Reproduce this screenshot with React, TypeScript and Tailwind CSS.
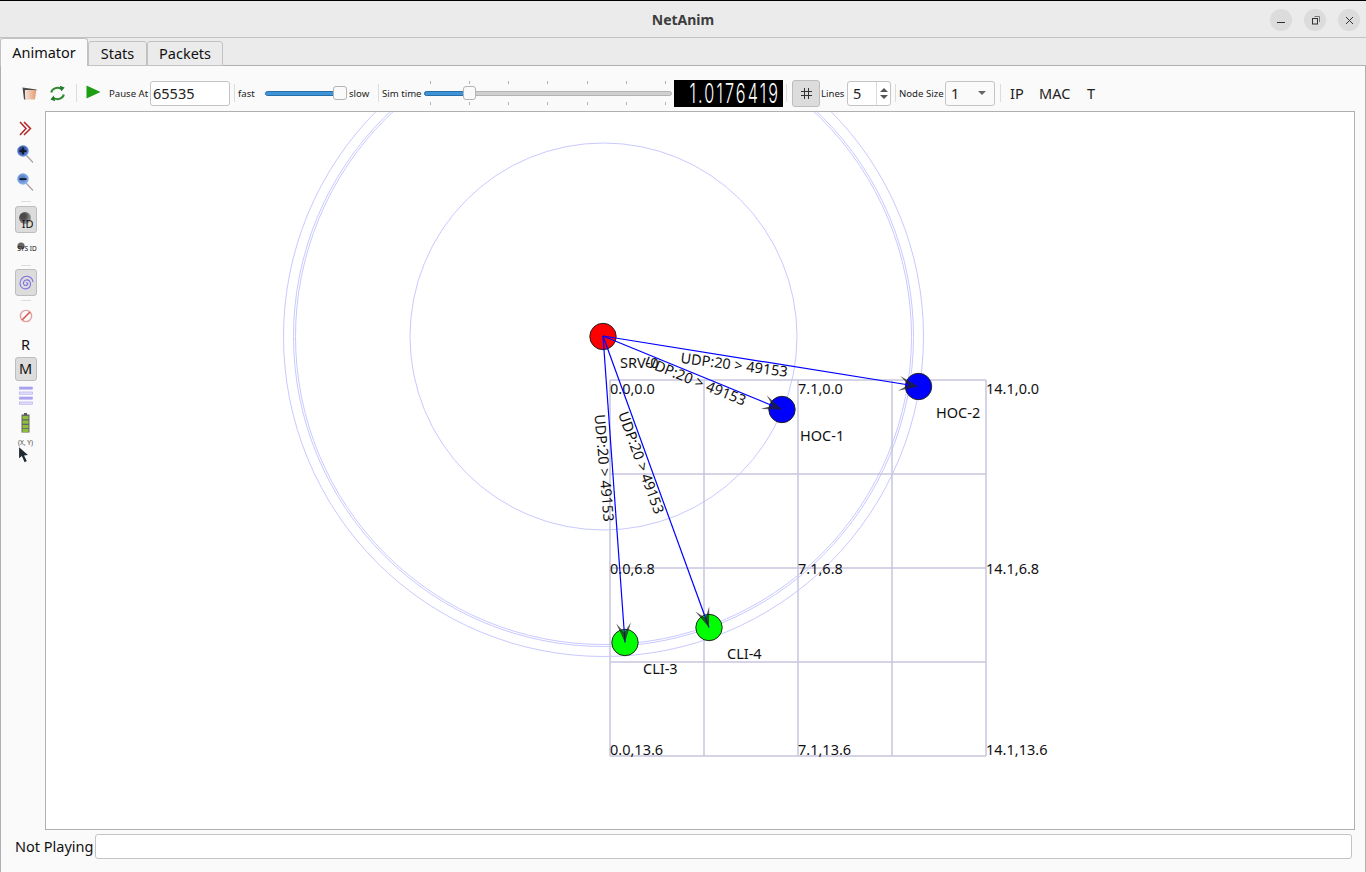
const font = { fontFamily: '"Noto Sans", "Open Sans", sans-serif' };

const grid = [610, 704, 798, 892, 986];
const gridY = [380, 474, 568, 662, 756];

const coords = [
  { t: '0.0,0.0', x: 610, y: 394 },
  { t: '7.1,0.0', x: 798, y: 394 },
  { t: '14.1,0.0', x: 986, y: 394 },
  { t: '0.0,6.8', x: 610, y: 574 },
  { t: '7.1,6.8', x: 798, y: 574 },
  { t: '14.1,6.8', x: 986, y: 574 },
  { t: '0.0,13.6', x: 610, y: 755 },
  { t: '7.1,13.6', x: 798, y: 755 },
  { t: '14.1,13.6', x: 986, y: 755 },
];

const nodes = [
  { x: 603, y: 336.5, fill: '#ff0000', label: 'SRV-0', lx: 620, ly: 368 },
  { x: 782, y: 409.5, fill: '#0000ff', label: 'HOC-1', lx: 800, ly: 441 },
  { x: 918.5, y: 386.5, fill: '#0000ff', label: 'HOC-2', lx: 936, ly: 418 },
  { x: 625, y: 642.5, fill: '#00ff00', label: 'CLI-3', lx: 643, ly: 674 },
  { x: 709, y: 627.5, fill: '#00ff00', label: 'CLI-4', lx: 727, ly: 659 },
];

const packetLabels = [
  { cx: 734, cy: 366, a: 7.5 },
  { cx: 695, cy: 382, a: 22 },
  { cx: 603, cy: 468, a: 85 },
  { cx: 640, cy: 463, a: 70 },
];

// arrow head drawn back from the tip along the line
function Head({ x, y }: { x: number; y: number }) {
  const back = Math.atan2(336 - y, 603 - x);
  const pt = (a: number, l: number) => `${x + Math.cos(back + a) * l},${y + Math.sin(back + a) * l}`;
  const s = 0.36;
  return (
    <polygon
      points={`${x},${y} ${pt(s, 21)} ${pt(0, 10)} ${pt(-s, 21)}`}
      fill="#222222"
      fillOpacity={0.75}
    />
  );
}

function Topology() {
  return (
    <svg viewBox="46 112 1308 717" className="block w-full h-full" style={font}>
      <g fill="none" stroke="#c9c9ff" strokeWidth={1}>
        <circle cx={603.5} cy={336.5} r={193.5} />
        <circle cx={603.5} cy={336.5} r={320} />
        <circle cx={603.5} cy={336.5} r={310} />
        <circle cx={603.5} cy={336.5} r={308} />
      </g>
      <g stroke="#c6c6de" strokeWidth={1.5}>
        {grid.map((x) => (
          <line key={x} x1={x} y1={380} x2={x} y2={756} />
        ))}
        {gridY.map((y) => (
          <line key={y} x1={610} y1={y} x2={986} y2={y} />
        ))}
      </g>
      <g fontSize={14.5} fill="#111111">
        {coords.map((c) => (
          <text key={c.t} x={c.x} y={c.y}>
            {c.t}
          </text>
        ))}
      </g>
      {nodes.map((n) => (
        <circle key={n.label} cx={n.x} cy={n.y} r={13.2} fill={n.fill} stroke="#222222" strokeWidth={1} />
      ))}
      <g fontSize={14.5} fill="#111111">
        {nodes.map((n) => (
          <text key={n.label} x={n.lx} y={n.ly}>
            {n.label}
          </text>
        ))}
      </g>
      <g stroke="#0000ff" strokeWidth={1.2}>
        {nodes.slice(1).map((n) => (
          <line key={n.label} x1={603} y1={336} x2={n.x} y2={n.y} />
        ))}
      </g>
      {nodes.slice(1).map((n) => (
        <Head key={n.label} x={n.x} y={n.y} />
      ))}
      <g fontSize={14.5} fill="#111111" textAnchor="middle">
        {packetLabels.map((p) => (
          <text key={p.a} x={0} y={0} transform={`translate(${p.cx} ${p.cy}) rotate(${p.a})`} dominantBaseline="middle">
            UDP:20 &gt; 49153
          </text>
        ))}
      </g>
    </svg>
  );
}

function Sep() {
  return <div className="w-px h-[18px] bg-[#dcdcdc] shrink-0" />;
}

function HSep({ className }: { className: string }) {
  return <div className={`h-px w-[10px] bg-[#dcdcdc] ${className}`} />;
}

function Magnifier({ plus }: { plus: boolean }) {
  const id = plus ? 'lensPlus' : 'lensMinus';
  return (
    <svg width="20" height="20" viewBox="0 0 20 20">
      <defs>
        <radialGradient id={id} cx="0.45" cy="0.45" r="0.55">
          <stop offset="0.3" stopColor={plus ? '#27397c' : '#5b7fc0'} />
          <stop offset="1" stopColor={plus ? '#6f9cf2' : '#8fb8f8'} />
        </radialGradient>
      </defs>
      <line x1="10" y1="11" x2="17" y2="18.5" stroke="#b39aa6" strokeWidth="1.2" />
      <circle cx="7" cy="7" r="5.8" fill={`url(#${id})`} />
      <rect x="3.5" y="6.2" width="7" height="1.8" fill="#10182e" />
      {plus && <rect x="6.1" y="3.5" width="1.8" height="7" fill="#10182e" />}
    </svg>
  );
}

function LeftBar() {
  return (
    <div className="w-[44px] shrink-0 flex flex-col items-center pl-[5px] pt-[7px] text-[#111]">
      <div className="h-[20px] flex items-center">
        <svg width="13" height="15" viewBox="0 0 13 15" fill="none" stroke="#b3262a" strokeWidth="1.5">
          <path d="M1 1 L7 7.5 L1 14" />
          <path d="M5 1 L11.5 7.5 L5 14" />
        </svg>
      </div>
      <div className="h-[32px] flex items-center">
        <Magnifier plus />
      </div>
      <div className="h-[24px] flex items-center">
        <Magnifier plus={false} />
      </div>
      <HSep className="mt-[7px] mb-[3px]" />
      <div className="w-[22px] h-[27px] mt-px rounded-[3px] border border-[#bdbdbd] bg-[#dcdcdc] flex items-center justify-center relative">
        <svg width="20" height="20" viewBox="0 0 20 20" className="absolute left-0 top-[2px]">
          <defs>
            <radialGradient id="idBall" cx="0.35" cy="0.35" r="0.75">
              <stop offset="0.3" stopColor="#4a4a4a" />
              <stop offset="1" stopColor="#a8a8a8" />
            </radialGradient>
          </defs>
          <circle cx="9" cy="9" r="6" fill="url(#idBall)" />
        </svg>
        <span className="absolute right-[2px] bottom-[3px] text-[11px] leading-none">ID</span>
      </div>
      <div className="h-[30px] flex items-center relative w-[22px] justify-center">
        <svg width="8" height="8" viewBox="0 0 8 8" className="absolute left-[2px] top-[9px]">
          <circle cx="4" cy="4" r="3.6" fill="#666666" />
        </svg>
        <span className="text-[6.5px] leading-none mt-[3px] ml-[3px] relative whitespace-nowrap">SYS ID</span>
      </div>
      <HSep className="mt-[2px] mb-[3px]" />
      <div className="w-[22px] h-[27px] rounded-[3px] border border-[#bdbdbd] bg-[#dcdcdc] flex items-center justify-center">
        <svg width="16" height="18" viewBox="0 0 16 18" fill="none" stroke="#7b6ee0" strokeWidth="1.1">
          <path d="M8 9 C9.5 8 10.5 10 9 11 C7 12.5 5 10.5 5.5 8.5 C6 6 9.5 5 11.5 7 C13.5 9.5 12.5 13.5 9.5 14.5 C5.5 16 2 13 2 9.5 C2 5 5.5 2 9 2.3 C12 2.5 14.5 5 15 8" />
        </svg>
      </div>
      <HSep className="mt-[4px] mb-[3px]" />
      <div className="h-[24px] flex items-center">
        <svg width="14" height="14" viewBox="0 0 14 14" fill="none">
          <circle cx="7" cy="7" r="5.6" stroke="#e3a0a0" strokeWidth="1.4" />
          <line x1="3" y1="11" x2="11" y2="3" stroke="#d4574f" strokeWidth="1.6" />
        </svg>
      </div>
      <div className="h-[24px] mt-[5px] flex items-center text-[14.5px]">R</div>
      <div className="w-[22px] h-[24px] rounded-[3px] border border-[#bdbdbd] bg-[#dcdcdc] flex items-center justify-center text-[14.5px]">
        M
      </div>
      <div className="h-[28px] flex items-center">
        <svg width="14" height="19" viewBox="0 0 14 19">
          {[1, 6, 11, 16].map((y, i) => (
            <rect key={y} x="0.5" y={y} width="13" height="2.2" fill={i % 2 ? '#e4e1fb' : '#a9a2ee'} stroke="#a9a2ee" strokeWidth="0.6" />
          ))}
        </svg>
      </div>
      <div className="h-[28px] flex items-center">
        <svg width="9" height="20" viewBox="0 0 9 20">
          <rect x="3" y="0" width="3" height="2" fill="#555555" />
          <rect x="0.5" y="1.5" width="8" height="18" fill="#666666" />
          {[3, 7.5, 12, 16].map((y) => (
            <rect key={y} x="1.5" y={y} width="6" height="3.2" fill="#8fbf3a" />
          ))}
        </svg>
      </div>
      <div className="h-[28px] flex flex-col items-center pt-[3px] w-[22px]">
        <span className="text-[6.5px] leading-none text-[#444] whitespace-nowrap">(X, Y)</span>
        <svg width="11" height="16" viewBox="0 0 10 14" className="-ml-[5px]">
          <path d="M1 0 L1 10 L3.5 8 L6 13.5 L8 12.5 L5.5 7.5 L9 7 Z" fill="#1f2a33" />
        </svg>
      </div>
    </div>
  );
}

function TopToolbar() {
  return (
    <div className="h-[45px] flex items-center pt-[9px] text-[#222] shrink-0">
      <div className="w-[21px] shrink-0" />
      <svg width="15" height="13" viewBox="0 0 15 13" className="shrink-0">
        <defs>
          <linearGradient id="bookFace" x1="0" x2="1" y1="0" y2="0">
            <stop offset="0" stopColor="#f6e4d8" />
            <stop offset="1" stopColor="#e39a72" />
          </linearGradient>
        </defs>
        <path d="M0.5 0.5 L14.5 2.5 V3.5 H3 L3.5 12.5 H2 Z" fill="#4c4c4c" />
        <path d="M3 3 H14.3 L13 12.5 H3.5 Z" fill="url(#bookFace)" />
      </svg>
      <div className="w-[12px] shrink-0" />
      <svg width="17" height="17" viewBox="0 0 17 17" fill="none" className="shrink-0">
        <path d="M2.2 7.5 C3 3.6 8 1.4 12.3 4" stroke="#2e8b2e" strokeWidth="2" />
        <path d="M10.8 0.8 L15.6 2.4 L12.3 6.4 Z" fill="#1f7a2a" />
        <path d="M14.8 9.5 C14 13.4 9 15.6 4.7 13" stroke="#2e8b2e" strokeWidth="2" />
        <path d="M6.2 16.2 L1.4 14.6 L4.7 10.6 Z" fill="#1f7a2a" />
      </svg>
      <div className="w-[10px] shrink-0" />
      <Sep />
      <div className="w-[9px] shrink-0" />
      <svg width="15" height="14" viewBox="0 0 15 14" className="shrink-0 -mt-[3px]">
        <polygon points="0.5,0.5 14.5,7 0.5,13.5" fill="#1e9c14" />
      </svg>
      <div className="w-[8px] shrink-0" />
      <span className="text-[9.6px] pt-[2px] w-[41px] shrink-0 whitespace-nowrap">Pause At</span>
      <div className="w-[80px] h-[25px] shrink-0 rounded-[3px] border border-[#c4c4c4] bg-white pl-[2px] flex items-center text-[14.5px] leading-none">
        65535
      </div>
      <div className="w-[4px] shrink-0" />
      <Sep />
      <div className="w-[3px] shrink-0" />
      <span className="text-[9.6px] pt-[2px] w-[27px] shrink-0">fast</span>
      <div className="w-[82px] h-[16px] relative shrink-0 flex items-center">
        <div className="w-full h-[5px] rounded-full bg-[#3d94d8] border border-[#2b6ea5]" />
        <div className="absolute right-0 top-[1px] w-[14px] h-[14px] rounded-[3px] border border-[#b4b4b4] bg-[#fafafa]" />
      </div>
      <div className="w-[2px] shrink-0" />
      <span className="text-[9.6px] pt-[2px] w-[29px] shrink-0">slow</span>
      <Sep />
      <div className="w-[3px] shrink-0" />
      <span className="text-[9.6px] pt-[2px] w-[42px] shrink-0 whitespace-nowrap">Sim time</span>
      <div className="w-[248px] h-[24px] relative shrink-0 flex items-center">
        <div className="absolute inset-x-[6px] top-0 flex justify-between">
          {[0, 1, 2, 3, 4, 5, 6].map((i) => (
            <div key={i} className="w-px h-[3px] bg-[#b4b4b4]" />
          ))}
        </div>
        <div className="absolute inset-x-[6px] bottom-0 flex justify-between">
          {[0, 1, 2, 3, 4, 5, 6].map((i) => (
            <div key={i} className="w-px h-[3px] bg-[#b4b4b4]" />
          ))}
        </div>
        <div className="w-full h-[5px] rounded-full bg-[#d0d0d0] border border-[#b4b4b4]" />
        <div className="absolute left-0 w-[40px] h-[5px] rounded-l-full bg-[#3d94d8] border border-[#2b6ea5]" />
        <div className="absolute left-[39px] top-[5px] w-[13px] h-[14px] rounded-[3px] border border-[#b4b4b4] bg-[#fafafa]" />
      </div>
      <div className="w-[2px] shrink-0" />
      <div
        className="w-[109px] h-[27px] shrink-0 bg-black text-white flex items-center justify-end pr-[3px]"
        style={{ fontFamily: '"Inter", sans-serif' }}
      >
        <span className="w-[90px] text-[27px] font-light leading-none tracking-[3.5px] scale-x-[0.6] origin-right whitespace-nowrap flex justify-end">
          1.0176419
        </span>
      </div>
      <div className="w-[3px] shrink-0" />
      <Sep />
      <div className="w-[5px] shrink-0" />
      <div className="w-[28px] h-[27px] shrink-0 rounded-[3px] border border-[#bdbdbd] bg-[#dcdcdc] flex items-center justify-center">
        <svg width="11" height="11" viewBox="0 0 11 11" stroke="#333333" strokeWidth="1">
          <path d="M3.5 0 V11 M7.5 0 V11 M0 3.5 H11 M0 7.5 H11" />
        </svg>
      </div>
      <div className="w-px shrink-0" />
      <span className="text-[9.6px] pt-[2px] w-[26px] shrink-0">Lines</span>
      <div className="w-[44px] h-[25px] shrink-0 rounded-[3px] border border-[#c4c4c4] bg-white flex items-center text-[14.5px] leading-none">
        <span className="flex-1 pl-[5px]">5</span>
        <div className="w-[14px] h-full border-l border-[#dcdcdc] flex flex-col items-center justify-center gap-[3px]">
          <div className="w-0 h-0 border-x-[4px] border-x-transparent border-b-[4px] border-b-[#555]" />
          <div className="w-0 h-0 border-x-[4px] border-x-transparent border-t-[4px] border-t-[#555]" />
        </div>
      </div>
      <div className="w-[4px] shrink-0" />
      <Sep />
      <div className="w-[3px] shrink-0" />
      <span className="text-[9.6px] pt-[2px] w-[46px] shrink-0 whitespace-nowrap">Node Size</span>
      <div className="w-[50px] h-[25px] shrink-0 rounded-[3px] border border-[#c4c4c4] bg-[#fafafa] flex items-center justify-between pl-[5px] pr-[8px] text-[14.5px] leading-none">
        <span>1</span>
        <div className="w-0 h-0 border-x-[4px] border-x-transparent border-t-[4px] border-t-[#666]" />
      </div>
      <div className="w-[5px] shrink-0" />
      <Sep />
      <span className="text-[14.5px] pt-px ml-[9px] w-[29px] shrink-0">IP</span>
      <span className="text-[14.5px] pt-px w-[48px] shrink-0">MAC</span>
      <span className="text-[14.5px] pt-px">T</span>
    </div>
  );
}

export default function App() {
  return (
    <div className="w-[1366px] h-[872px] flex flex-col bg-[#ebebeb] text-[#111] overflow-hidden" style={font}>
      {/* Title bar */}
      <div className="h-[38px] shrink-0 border-t border-black border-b border-b-[#c2c2c2] flex items-center relative">
        <span className="flex-1 text-center text-[14px] font-bold text-[#3d3d3d]">NetAnim</span>
        <div className="absolute right-[6px] top-[8px] flex gap-[12px]">
          <div className="w-[22px] h-[22px] rounded-full bg-[#dcdcdc] flex items-center justify-center">
            <div className="w-[8px] h-px bg-[#333] mt-[4px]" />
          </div>
          <div className="w-[22px] h-[22px] rounded-full bg-[#dcdcdc] flex items-center justify-center">
            <svg width="9" height="9" viewBox="0 0 9 9" fill="none" stroke="#333333">
              <rect x="1.5" y="2.5" width="5" height="5.5" />
              <path d="M3.5 0.5 H8.5 V6" stroke="#777777" />
            </svg>
          </div>
          <div className="w-[22px] h-[22px] rounded-full bg-[#dcdcdc] flex items-center justify-center">
            <svg width="9" height="9" viewBox="0 0 9 9" stroke="#333333">
              <path d="M1 1 L8 8 M8 1 L1 8" />
            </svg>
          </div>
        </div>
      </div>

      {/* Tabs */}
      <div className="h-[28px] shrink-0 flex items-end relative z-10 text-[14.5px]">
        <div className="w-[88px] h-[28px] rounded-t-[3px] border border-b-0 border-[#c2c2c2] bg-[#fafafa] flex items-center justify-center">
          Animator
        </div>
        <div className="w-[59px] h-[25px] rounded-t-[3px] border border-[#c2c2c2] bg-[#ebebeb] flex items-center justify-center">
          Stats
        </div>
        <div className="w-[76px] h-[25px] rounded-t-[3px] border border-[#c2c2c2] bg-[#ebebeb] flex items-center justify-center">
          Packets
        </div>
      </div>

      {/* Page */}
      <div className="flex-1 flex flex-col min-h-0 bg-[#fafafa] border-l border-r border-t border-[#b0b0b0] -mt-px">
        <TopToolbar />
        <div className="flex-1 flex min-h-0">
          <LeftBar />
          <div className="flex-1 min-w-0 mr-[10px] border border-[#b0b0b0] bg-white overflow-hidden">
            <Topology />
          </div>
        </div>
        <div className="h-[42px] shrink-0 flex items-start pt-[4px] pl-[14px] pr-[13px] text-[14.5px]">
          <span className="w-[80px] shrink-0 whitespace-nowrap leading-[25px]">Not Playing</span>
          <div className="flex-1 h-[25px] rounded-[3px] border border-[#c4c4c4] bg-white" />
        </div>
      </div>
    </div>
  );
}
